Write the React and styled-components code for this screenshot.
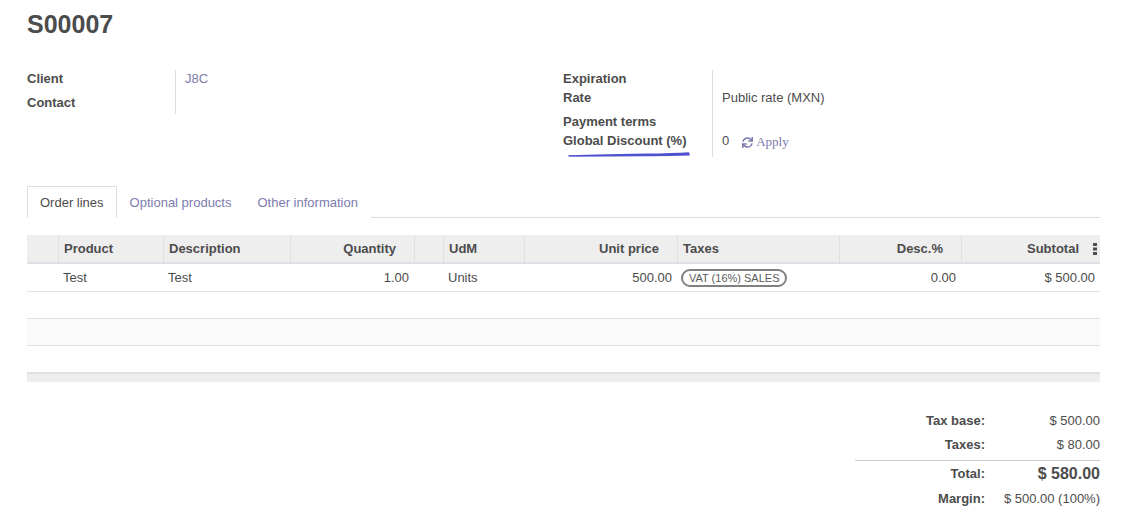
import React from "react";
import styled, { createGlobalStyle } from "styled-components";
import { FaSync } from "react-icons/fa";

const GlobalStyle = createGlobalStyle`
  body {
    margin: 0;
    background: #ffffff;
    font-family: "Liberation Sans", Arial, sans-serif;
    font-size: 13px;
    color: #4c4c4c;
  }
`;

const Sheet = styled.div`
  width: 1073px;
  padding: 0 28px 0 27px;
`;

const Title = styled.h1`
  margin: 0;
  padding-top: 9px;
  font-size: 25px;
  line-height: 30px;
  font-weight: bold;
  color: #4c4c4c;
`;

const Groups = styled.div`
  display: grid;
  grid-template-columns: 536px 537px;
  align-items: start;
  margin-top: 31px;
`;

const Group = styled.div`
  display: grid;
  grid-template-columns: ${(p) => p.$label}px 1fr;
  align-content: start;
`;

const Label = styled.div`
  position: relative;
  height: ${(p) => p.$h}px;
  font-weight: bold;
  line-height: 18px;
  color: #4c4c4c;
`;

const Value = styled.div`
  height: ${(p) => p.$h}px;
  line-height: 18px;
  padding-left: 9px;
  border-left: 1px solid #dddddd;
  color: ${(p) => (p.$link ? "#7c7bad" : "#4c4c4c")};
  display: flex;
  align-items: flex-start;
  gap: 13px;
`;

const Scribble = styled.svg`
  position: absolute;
  left: 4px;
  top: 18px;
`;

const ApplyButton = styled.span`
  display: inline-flex;
  align-items: center;
  gap: 3px;
  font-family: "Liberation Serif", "Times New Roman", serif;
  font-size: 13px;
  color: #7c7bad;
  margin-top: 1px;
  svg {
    width: 11px;
    height: 11px;
  }
`;

const Tabs = styled.div`
  display: flex;
  margin-top: 29px;
  border-bottom: 1px solid #dddddd;
`;

const Tab = styled.div`
  height: 31px;
  line-height: 31px;
  padding: 0 12px;
  border: 1px solid ${(p) => (p.$active ? "#dddddd" : "transparent")};
  border-bottom: none;
  border-radius: 2px 2px 0 0;
  margin-bottom: -1px;
  background: #ffffff;
  color: ${(p) => (p.$active ? "#4c4c4c" : "#7c7bad")};
`;

const cols = "31px 105px 127px 124px 29px 81px 153px 162px 122px 139px";

const Table = styled.div`
  margin-top: 17px;
`;

const HeadRow = styled.div`
  display: grid;
  grid-template-columns: ${cols};
  height: 27px;
  background: #eeeeee;
  border-bottom: 2px solid #dfe0e6;
`;

const HeadCell = styled.div`
  display: flex;
  align-items: center;
  justify-content: ${(p) => (p.$right ? "flex-end" : "flex-start")};
  gap: 14px;
  padding: ${(p) => (p.$right ? "0 18px 0 5px" : "0 5px")};
  border-left: ${(p) => (p.$first ? "none" : "1px solid #e0e0e0")};
  font-weight: bold;
  color: #4c4c4c;
  white-space: nowrap;
`;

const SubtotalHead = styled(HeadCell)`
  padding-right: 3px;
`;

const Row = styled.div`
  display: grid;
  grid-template-columns: ${cols};
  height: ${(p) => (p.$filled ? 27 : 26)}px;
  background: ${(p) => (p.$shade ? "#fafafa" : "#ffffff")};
  border-bottom: 1px solid #e2e2e8;
`;

const Cell = styled.div`
  display: flex;
  align-items: center;
  justify-content: ${(p) => (p.$right ? "flex-end" : "flex-start")};
  padding: 0 5px;
  color: #4c4c4c;
  white-space: nowrap;
`;

const Badge = styled.span`
  display: inline-block;
  height: 14px;
  line-height: 14px;
  padding: 0 6px;
  border: 2px solid #808080;
  border-radius: 9px;
  font-size: 11px;
  color: #5a5a5a;
  margin-left: -1px;
`;

const TableFoot = styled.div`
  height: 8px;
  background: #eeeeee;
  border-top: 1px solid #dddddd;
`;

const Totals = styled.div`
  display: grid;
  grid-template-columns: 130px 115px;
  width: 245px;
  margin: 27px 0 0 auto;
`;

const TotalLabel = styled.div`
  text-align: right;
  font-weight: bold;
  line-height: ${(p) => (p.$rule ? 26 : 24)}px;
  margin-top: ${(p) => (p.$rule ? "3px" : "0")};
  border-top: ${(p) => (p.$rule ? "1px solid #cccccc" : "none")};
`;

const TotalValue = styled.div`
  text-align: right;
  line-height: ${(p) => (p.$rule ? 26 : 24)}px;
  margin-top: ${(p) => (p.$rule ? "3px" : "0")};
  font-size: ${(p) => (p.$big ? "16px" : "13px")};
  font-weight: ${(p) => (p.$big ? "bold" : "normal")};
  border-top: ${(p) => (p.$rule ? "1px solid #cccccc" : "none")};
`;

const Kebab = () => (
  <svg width="4" height="12" viewBox="0 0 4 12">
    <rect x="0" y="0" width="4" height="3" fill="#4c4c4c" />
    <rect x="0" y="4.5" width="4" height="3" fill="#4c4c4c" />
    <rect x="0" y="9" width="4" height="3" fill="#4c4c4c" />
  </svg>
);

const headers = [
  { t: "" },
  { t: "Product" },
  { t: "Description" },
  { t: "Quantity", r: true },
  { t: "" },
  { t: "UdM" },
  { t: "Unit price", r: true },
  { t: "Taxes" },
  { t: "Desc.%", r: true },
];

export default function App() {
  return (
    <>
      <GlobalStyle />
      <Sheet>
        <Title>S00007</Title>

        <Groups>
          <Group $label={148}>
            <Label $h={24}>Client</Label>
            <Value $h={24} $link>J8C</Value>
            <Label $h={20}>Contact</Label>
            <Value $h={20} />
          </Group>
          <Group $label={149}>
            <Label $h={19}>Expiration</Label>
            <Value $h={19} />
            <Label $h={24}>Rate</Label>
            <Value $h={24}>Public rate (MXN)</Value>
            <Label $h={19}>Payment terms</Label>
            <Value $h={19} />
            <Label $h={25}>
              Global Discount (%)
              <Scribble width="126" height="8" viewBox="0 0 126 8">
                <path
                  d="M1 5.2 Q40 4.2 80 3.6 Q105 3.2 122 2.2 L123 5.6 Q100 6.4 80 6.3 Q40 6.4 2 6.8 Z"
                  fill="#4e52cf"
                />
              </Scribble>
            </Label>
            <Value $h={25}>
              0
              <ApplyButton>
                <FaSync />
                Apply
              </ApplyButton>
            </Value>
          </Group>
        </Groups>

        <Tabs>
          <Tab $active>Order lines</Tab>
          <Tab>Optional products</Tab>
          <Tab>Other information</Tab>
        </Tabs>

        <Table>
          <HeadRow>
            {headers.map((h, i) => (
              <HeadCell key={i} $first={i === 0} $right={h.r}>
                {h.t}
              </HeadCell>
            ))}
            <SubtotalHead $right>
              Subtotal
              <Kebab />
            </SubtotalHead>
          </HeadRow>
          <Row $filled>
            <Cell />
            <Cell>Test</Cell>
            <Cell>Test</Cell>
            <Cell $right>1.00</Cell>
            <Cell />
            <Cell>Units</Cell>
            <Cell $right>500.00</Cell>
            <Cell>
              <Badge>VAT (16%) SALES</Badge>
            </Cell>
            <Cell $right>0.00</Cell>
            <Cell $right>$ 500.00</Cell>
          </Row>
          <Row />
          <Row $shade />
          <Row />
          <TableFoot />
        </Table>

        <Totals>
          <TotalLabel>Tax base:</TotalLabel>
          <TotalValue>$ 500.00</TotalValue>
          <TotalLabel>Taxes:</TotalLabel>
          <TotalValue>$ 80.00</TotalValue>
          <TotalLabel $rule>Total:</TotalLabel>
          <TotalValue $rule $big>$ 580.00</TotalValue>
          <TotalLabel>Margin:</TotalLabel>
          <TotalValue>$ 500.00 (100%)</TotalValue>
        </Totals>
      </Sheet>
    </>
  );
}
